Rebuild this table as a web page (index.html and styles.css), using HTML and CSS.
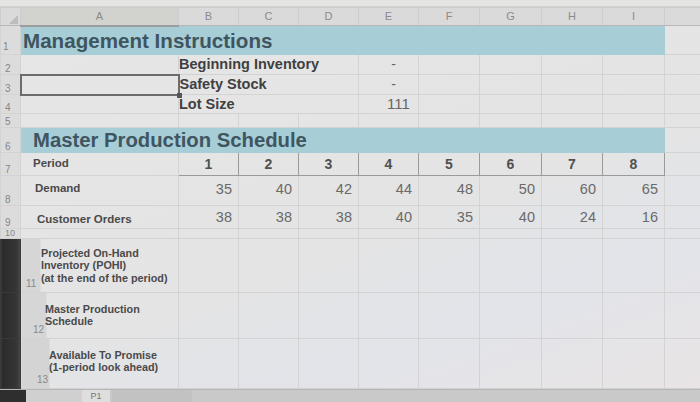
FILE: index.html
```html
<!DOCTYPE html>
<html>
<head>
<meta charset="utf-8">
<link rel="stylesheet" href="styles.css">
</head>
<body>
<div class="screen">
  <div class="toolbar"></div>
  <table class="sheet">
    <colgroup>
      <col class="c-rh"><col class="c-a"><col class="c-n"><col class="c-n"><col class="c-n"><col class="c-n"><col class="c-f"><col class="c-g"><col class="c-f"><col class="c-g"><col class="c-j">
    </colgroup>
    <tr class="r-head">
      <th class="corner"><span class="tri"></span></th>
      <th class="sel-col">A</th><th>B</th><th>C</th><th>D</th><th>E</th><th>F</th><th>G</th><th>H</th><th>I</th><th></th>
    </tr>
    <tr class="r1">
      <td class="rh">1</td>
      <td class="band b1" colspan="9"><span class="title t1">Management Instructions</span></td>
      <td></td>
    </tr>
    <tr class="r2">
      <td class="rh">2</td><td></td>
      <td class="lbl" colspan="3">Beginning Inventory</td>
      <td class="val">-</td><td></td><td></td><td></td><td></td><td></td>
    </tr>
    <tr class="r3">
      <td class="rh">3</td><td class="active"><span class="handle"></span></td>
      <td class="lbl" colspan="3">Safety Stock</td>
      <td class="val">-</td><td></td><td></td><td></td><td></td><td></td>
    </tr>
    <tr class="r4">
      <td class="rh">4</td><td></td>
      <td class="lbl" colspan="3">Lot Size</td>
      <td class="val num">111</td><td></td><td></td><td></td><td></td><td></td>
    </tr>
    <tr class="r5">
      <td class="rh">5</td><td></td><td></td><td></td><td></td><td></td><td></td><td></td><td></td><td></td><td></td>
    </tr>
    <tr class="r6">
      <td class="rh">6</td>
      <td class="band b6" colspan="9"><span class="title t2">Master Production Schedule</span></td>
      <td></td>
    </tr>
    <tr class="r7">
      <td class="rh">7</td><td class="row-lbl period">Period</td>
      <td class="per">1</td><td class="per">2</td><td class="per">3</td><td class="per">4</td><td class="per">5</td><td class="per">6</td><td class="per">7</td><td class="per">8</td><td></td>
    </tr>
    <tr class="r8">
      <td class="rh">8</td><td class="row-lbl l8">Demand</td>
      <td class="d">35</td><td class="d">40</td><td class="d">42</td><td class="d">44</td><td class="d">48</td><td class="d">50</td><td class="d">60</td><td class="d">65</td><td></td>
    </tr>
    <tr class="r9">
      <td class="rh">9</td><td class="row-lbl l9">Customer Orders</td>
      <td class="d">38</td><td class="d">38</td><td class="d">38</td><td class="d">40</td><td class="d">35</td><td class="d">40</td><td class="d">24</td><td class="d">16</td><td></td>
    </tr>
    <tr class="r10">
      <td class="rh">10</td><td></td><td></td><td></td><td></td><td></td><td></td><td></td><td></td><td></td><td></td>
    </tr>
    <tr class="r11">
      <td class="rh dark"><span class="rn n11">11</span></td>
      <td class="row-lbl multi l11">Projected On-Hand<br>Inventory (POHI)<br>(at the end of the period)</td>
      <td></td><td></td><td></td><td></td><td></td><td></td><td></td><td></td><td></td>
    </tr>
    <tr class="r12">
      <td class="rh dark"><span class="rn n12">12</span></td>
      <td class="row-lbl multi l12">Master Production<br>Schedule</td>
      <td></td><td></td><td></td><td></td><td></td><td></td><td></td><td></td><td></td>
    </tr>
    <tr class="r13">
      <td class="rh dark"><span class="rn n13">13</span></td>
      <td class="row-lbl multi l13">Available To Promise<br>(1-period look ahead)</td>
      <td></td><td></td><td></td><td></td><td></td><td></td><td></td><td></td><td></td>
    </tr>
  </table>
  <div class="tabs">
    <div class="bezel"></div>
    <div class="nav"></div>
    <div class="tab on">P1</div>
    <div class="tab off"></div>
  </div>
</div>
</body>
</html>
```
FILE: styles.css
```css
* { box-sizing: border-box; }
html, body { margin: 0; padding: 0; }
body {
  width: 700px;
  height: 402px;
  overflow: hidden;
  background: #e3e3e3;
  font-family: "Liberation Sans", Arial, sans-serif;
}
.screen {
  width: 700px;
  height: 402px;
  display: flex;
  flex-direction: column;
  background: linear-gradient(160deg, #e6e6e6 0%, #e4e4e4 55%, #e2e4ea 75%, #e9e4e4 100%);
}
.toolbar {
  height: 7px;
  flex: none;
  background: #e4e4e2;
  border-bottom: 1px solid #d2d2d2;
}
.sheet {
  flex: none;
  border-collapse: collapse;
  table-layout: fixed;
  width: 700px;
}
.c-rh { width: 20px; }
.c-a { width: 158px; }
.c-n { width: 60px; }
.c-f { width: 61px; }
.c-g { width: 62px; }
.c-j { width: 36px; }

.sheet td, .sheet th {
  border: 1px solid #d3d3d3;
  padding: 0;
  white-space: nowrap;
  overflow: visible;
  line-height: 1.15;
}
.r-head th {
  height: 18px;
  background: #dadada;
  color: #8a8a8a;
  font-weight: normal;
  font-size: 11px;
  text-align: center;
  border-color: #cdcdcd;
  border-bottom: 1px solid #b8b8b8;
}
.r-head th.sel-col { background: #d2d2cf; border-bottom: 2px solid #9c9c9c; }
.tri {
  display: block;
  width: 0; height: 0;
  margin: 6px 0 0 8px;
  border-left: 9px solid transparent;
  border-bottom: 9px solid #bdbdbd;
}
.rh {
  background: #dcdcdc;
  color: #868686;
  font-size: 10px;
  text-align: left;
  padding-left: 4px !important;
  vertical-align: bottom;
  border-color: #cfcfcf;
}
.r1 .rh { padding-left: 2px !important; padding-bottom: 2px !important; }
.rh.dark {
  background: linear-gradient(90deg, #2a2a2a 0%, #363636 80%, #4a4a4a 100%);
  border-color: #3a3a3a;
}
.rn { display: inline-block; color: #8a8a8a; font-size: 10px; padding-bottom: 3px; }
.n11 { margin-left: 21px; }
.n12 { margin-left: 28px; }
.n13 { margin-left: 32px; }

.r1 td { height: 29px; }
.r2 td, .r3 td { height: 20px; }
.r4 td { height: 19px; }
.r5 td { height: 14px; }
.r6 td { height: 25px; }
.r7 td { height: 23px; }
.r8 td { height: 30px; }
.r9 td { height: 23px; }
.r10 td { height: 10px; }
.r10 .rh { font-size: 9px; line-height: 9px; }
.r11 td { height: 54px; }
.r12 td { height: 46px; }
.r13 td { height: 50px; }

.band {
  background: #a7cdd7;
  border-color: #a7cdd7 !important;
  vertical-align: bottom;
}
.b1 { padding-bottom: 1px !important; }
.title {
  font-weight: bold;
  color: #3f5560;
  line-height: 24px;
}
.t1 { font-size: 20.6px; padding-left: 2px; }
.t2 { font-size: 20.3px; padding-left: 12px; }

.lbl {
  font-weight: bold;
  font-size: 14.5px;
  color: #404040;
  padding-left: 0 !important;
}
.val {
  text-align: center;
  color: #666;
  font-size: 14px;
  padding-left: 10px !important;
}
.val.num { font-size: 15px; padding-left: 20px !important; }

.active {
  border: 2px solid #6c6c6c !important;
  position: relative;
}
.handle {
  position: absolute;
  right: -4px;
  bottom: -4px;
  width: 5px;
  height: 5px;
  background: #555;
}

.row-lbl {
  font-weight: bold;
  color: #4a4a4a;
  font-size: 11.5px;
}
.period { padding-left: 12px !important; font-size: 11.5px; }
.l8 { padding-left: 14px !important; padding-bottom: 4px !important; }
.l9 { padding-left: 16px !important; }
.r9 td.d, .r9 td.l9 { vertical-align: bottom; padding-bottom: 2px !important; }
.multi {
  font-size: 10.8px;
  line-height: 14px;
  vertical-align: top;
}
.r11 .multi { background: linear-gradient(90deg, #d6d6d6 0, #d6d6d6 19px, transparent 19px); }
.r12 .multi { background: linear-gradient(90deg, #d6d6d6 0, #d6d6d6 25px, transparent 25px); }
.r13 .multi { background: linear-gradient(90deg, #d4d4d4 0, #d4d4d4 28px, transparent 28px); }
.l11 { padding-left: 20px !important; padding-top: 8px !important; }
.l12 { padding-left: 24px !important; padding-top: 10px !important; }
.l13 { padding-left: 28px !important; padding-top: 10px !important; }

.per {
  border: 1px solid #9a9a9a !important;
  text-align: center;
  font-weight: bold;
  font-size: 14px;
  color: #505050;
}
.d {
  text-align: right;
  padding-right: 6px !important;
  font-size: 14.5px;
  color: #6a6a6a;
  padding-bottom: 3px !important;
}

.tabs {
  flex: 1;
  min-height: 13px;
  display: flex;
  align-items: stretch;
  background: #c9c9c9;
  border-top: 1px solid #b5b5b5;
}
.bezel { width: 26px; background: #2e2e2e; }
.nav { width: 56px; background: #d0d0d0; }
.tab {
  font-size: 9px;
  color: #777;
  display: flex;
  align-items: center;
  justify-content: center;
}
.tab.on { width: 28px; background: #dedede; }
.tab.off { width: 80px; background: #c2c2c2; margin-left: 2px; }
```
